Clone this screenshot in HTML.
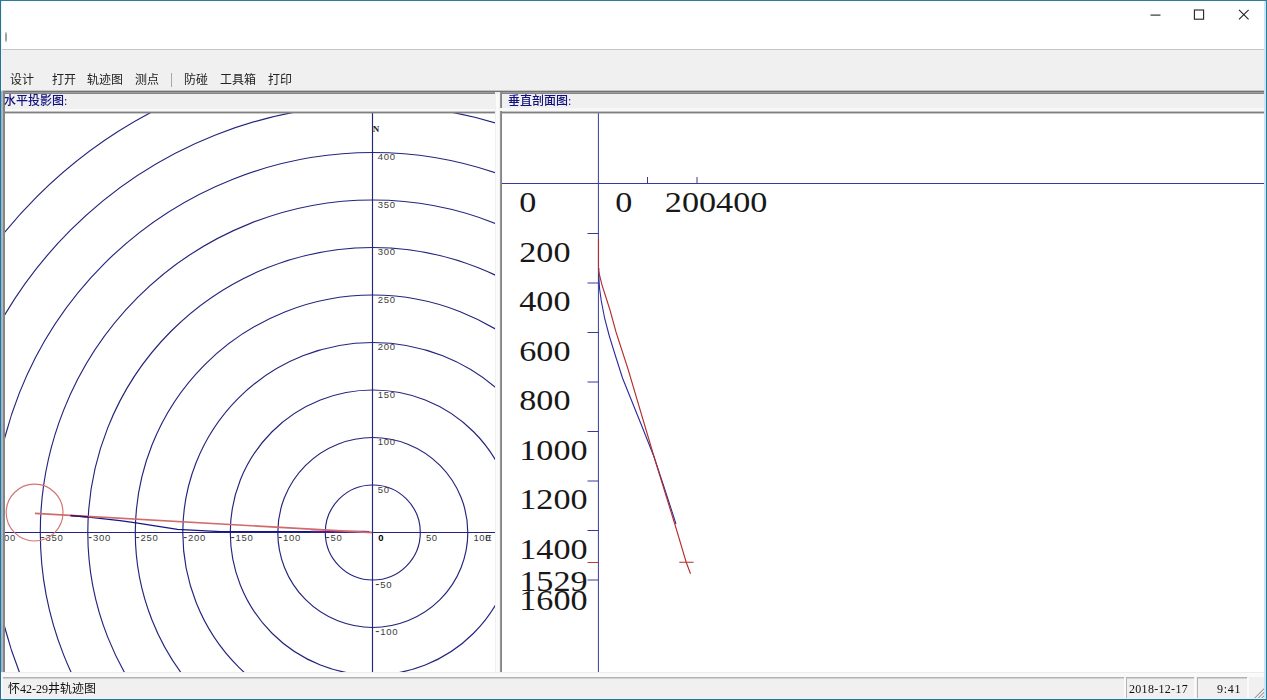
<!DOCTYPE html>
<html lang="zh-CN"><head><meta charset="utf-8"><title>怀42-29井轨迹图</title>
<style>
html,body{margin:0;padding:0}
body{width:1267px;height:700px;position:relative;overflow:hidden;background:#f0f0f0;font-family:"Liberation Serif","Noto Sans CJK SC",sans-serif;font-size:12px;color:#1a1a1a}
.abs{position:absolute}
.st,.lbl,.menu{will-change:transform}
.menu span{position:absolute;top:72px;line-height:16px;white-space:nowrap;color:#222}
.lbl{position:absolute;line-height:14px;color:#101080;font-weight:500;white-space:nowrap}
svg{position:absolute;display:block}
svg text{white-space:pre}
.ax{font-family:"Liberation Sans",sans-serif;font-size:9.5px;letter-spacing:0.7px;fill:#3c3c3c}
.big{font-family:"Liberation Serif","Noto Serif CJK SC",serif;font-size:30px;fill:#181818}
.st{position:absolute;line-height:14px;top:682px;white-space:nowrap;color:#111}
</style></head><body>

<div class="abs" style="left:0;top:0;width:1267px;height:49px;background:#fff"></div>
<div class="abs" style="left:0;top:49px;width:1267px;height:1px;background:#c6c6c6"></div>
<div class="abs" style="left:4.6px;top:32px;width:2.2px;height:10px;border-radius:50%;background:#98a2a6;filter:blur(0.4px)"></div>
<svg style="left:1140px;top:0" width="120" height="30" viewBox="1140 0 120 30"><g fill="none" stroke="#222" stroke-width="1.1"><path d="M1150.5 15.1H1160.5"/><rect x="1194.4" y="10" width="9.2" height="9.2"/><path d="M1239 9.8L1248.6 19.3M1248.6 9.8L1239 19.3"/></g></svg>
<div class="menu">
<span style="left:10px">设计</span>
<span style="left:52px">打开</span>
<span style="left:87px">轨迹图</span>
<span style="left:135px">测点</span>
<span style="left:184px">防碰</span>
<span style="left:220px">工具箱</span>
<span style="left:268px">打印</span>
</div>
<div class="abs" style="left:171px;top:73px;width:1px;height:14px;background:#a8a8a8"></div>
<div class="abs" style="left:2px;top:90px;width:1262px;height:1px;background:#c4c4c4"></div>
<div class="abs" style="left:2px;top:91px;width:1262px;height:1px;background:#727272"></div>
<div class="abs" style="left:2px;top:92px;width:493px;height:1px;background:#9c9c9c"></div>
<div class="abs" style="left:2px;top:93px;width:493px;height:1px;background:#858585"></div>
<div class="abs" style="left:500px;top:92px;width:764px;height:1px;background:#9c9c9c"></div>
<div class="abs" style="left:500px;top:93px;width:764px;height:1px;background:#858585"></div>
<div class="abs" style="left:2px;top:91px;width:1px;height:582px;background:#b0b8c0"></div>
<div class="abs" style="left:3px;top:91px;width:2px;height:582px;background:#858585"></div>
<div class="abs" style="left:5px;top:109px;width:490px;height:2px;background:#f8f8f8"></div>
<div class="abs" style="left:5px;top:111px;width:490px;height:1px;background:#c4c4c4"></div>
<div class="abs" style="left:5px;top:112px;width:490px;height:1px;background:#808080"></div>
<div class="abs" style="left:496px;top:94px;width:3px;height:578px;background:#fbfbfb"></div>
<div class="abs" style="left:500px;top:92px;width:1px;height:580px;background:#949494"></div>
<div class="abs" style="left:501px;top:92px;width:1px;height:580px;background:#848484"></div>
<div class="abs" style="left:500px;top:108px;width:764px;height:3px;background:#f8f8f8"></div>
<div class="abs" style="left:502px;top:111px;width:762px;height:1px;background:#c4c4c4"></div>
<div class="abs" style="left:502px;top:112px;width:762px;height:1px;background:#808080"></div>
<div class="lbl" style="left:3.8px;top:94px">水平投影图:</div>
<div class="lbl" style="left:508px;top:94px">垂直剖面图:</div>
<svg style="left:5px;top:113px;background:#fff" width="490" height="559" viewBox="5 113 490 559">
<g fill="none" stroke="#24247c" stroke-width="1.15">
<circle cx="372.8" cy="532.5" r="47.50"/>
<circle cx="372.8" cy="532.5" r="95.00"/>
<circle cx="372.8" cy="532.5" r="142.50"/>
<circle cx="372.8" cy="532.5" r="190.00"/>
<circle cx="372.8" cy="532.5" r="237.50"/>
<circle cx="372.8" cy="532.5" r="285.00"/>
<circle cx="372.8" cy="532.5" r="332.50"/>
<circle cx="372.8" cy="532.5" r="380.00"/>
<circle cx="372.8" cy="532.5" r="427.50"/>
<circle cx="372.8" cy="532.5" r="475.00"/>
<path d="M372.5 113V672M5 532.5H495"/>
</g>
<g class="ax">
<text x="375.2" y="635.3"><tspan style="font-size:12.5px;letter-spacing:1px">-</tspan>100</text>
<text x="375.2" y="587.8"><tspan style="font-size:12.5px;letter-spacing:1px">-</tspan>50</text>
<text x="377.7" y="492.8">50</text>
<text x="377.7" y="445.3">100</text>
<text x="377.7" y="397.8">150</text>
<text x="377.7" y="350.3">200</text>
<text x="377.7" y="302.8">250</text>
<text x="377.7" y="255.3">300</text>
<text x="377.7" y="207.8">350</text>
<text x="377.7" y="160.3">400</text>
<text x="-7.1" y="541.1"><tspan style="font-size:12.5px;letter-spacing:1px">-</tspan>400</text>
<text x="40.4" y="541.1"><tspan style="font-size:12.5px;letter-spacing:1px">-</tspan>350</text>
<text x="87.9" y="541.1"><tspan style="font-size:12.5px;letter-spacing:1px">-</tspan>300</text>
<text x="135.4" y="541.1"><tspan style="font-size:12.5px;letter-spacing:1px">-</tspan>250</text>
<text x="182.9" y="541.1"><tspan style="font-size:12.5px;letter-spacing:1px">-</tspan>200</text>
<text x="230.4" y="541.1"><tspan style="font-size:12.5px;letter-spacing:1px">-</tspan>150</text>
<text x="277.9" y="541.1"><tspan style="font-size:12.5px;letter-spacing:1px">-</tspan>100</text>
<text x="325.4" y="541.1"><tspan style="font-size:12.5px;letter-spacing:1px">-</tspan>50</text>
<text x="425.9" y="541.1">50</text>
<text x="473.4" y="541.1">100</text>
<text x="378.2" y="540.9" style="font-weight:bold;fill:#000">0</text>
<text x="485.3" y="541.1">E</text>
<text x="372.8" y="131.5" style="font-family:'Liberation Serif',serif;font-size:9px;font-weight:bold;fill:#222;letter-spacing:0">N</text>
</g>
<path d="M70.5 515.6L88.5 517.1L120 520.6L136 522.8L177.5 529.3L206 530.9L221 531.7L300 531.7L366 531.6L372 532.5" fill="none" stroke="#14148c" stroke-width="1.2"/>
<path d="M311 531.6L364 531.6L369 532" fill="none" stroke="#5a1c8c" stroke-width="1.9"/>
<g fill="none" stroke="#d26a6a"><circle cx="34.6" cy="512.6" r="28.4" stroke-width="1.15" stroke="#d47474"/><path d="M35 513.4L372 532.6" stroke-width="1.6"/></g>
<path d="M70.5 515.6L88.5 516.9" fill="none" stroke="#3a1060" stroke-width="1.5"/>
</svg>
<svg style="left:502px;top:113px;background:#fff" width="763" height="559" viewBox="502 113 763 559">
<path d="M598.4 113V672M502 183.5H1265M647.5 177V183.5M697 177V183.5M587.5 233.5H598.4M587.5 283.0H598.4M587.5 332.5H598.4M587.5 382.0H598.4M587.5 431.5H598.4M587.5 481.0H598.4M587.5 530.5H598.4M587.5 580.0H598.4" fill="none" stroke="#3838a0" stroke-width="1"/>
<path d="M587.5 562.5H598" stroke="#d03030" stroke-width="1" fill="none"/>
<g class="big">
<text transform="translate(519.2 212.4) scale(1.14 1)">0</text>
<text transform="translate(615.2 212.4) scale(1.14 1)">0</text>
<text transform="translate(664.8 212.4) scale(1.14 1)">200400</text>
<text transform="translate(519.2 261.9) scale(1.14 1)">200</text>
<text transform="translate(519.2 311.4) scale(1.14 1)">400</text>
<text transform="translate(519.2 360.9) scale(1.14 1)">600</text>
<text transform="translate(519.2 410.4) scale(1.14 1)">800</text>
<text transform="translate(519.2 459.9) scale(1.14 1)">1000</text>
<text transform="translate(519.2 509.4) scale(1.14 1)">1200</text>
<text transform="translate(519.2 558.9) scale(1.14 1)">1400</text>
<text transform="translate(519.2 591.2) scale(1.14 1)">1529</text>
<text transform="translate(519.2 609.9) scale(1.14 1)">1600</text>
</g>
<path d="M598.8 268L599 280L599.6 289L601.3 301L604.8 319L609.3 336L615.5 356L622.5 378L641 424L654 456.8L665 490L676 524" fill="none" stroke="#2a2a9c" stroke-width="1.1"/>
<path d="M598.5 239V271L602 285L610 310L616 332L628 369L655 460L676 528L686.2 562.2L690.5 573.7M679.3 562.3H693.6" fill="none" stroke="#b42c2c" stroke-width="1.1"/>
</svg>
<div class="abs" style="left:5px;top:113px;width:490px;height:1px;background:rgba(128,128,128,0.4)"></div>
<div class="abs" style="left:502px;top:113px;width:762px;height:1px;background:rgba(128,128,128,0.45)"></div>
<div class="abs" style="left:2px;top:672px;width:1263px;height:26px;background:#f0f0f0"></div>
<div class="abs" style="left:1px;top:672px;width:1263px;height:1px;background:#ececec"></div>
<div class="abs" style="left:1px;top:673px;width:1263px;height:4px;background:#fafafa"></div>
<div class="abs" style="left:1px;top:674px;width:2px;height:24px;background:#f4f8fa"></div>
<div class="abs" style="left:3px;top:677px;width:1121px;height:1px;background:#b2b2b2"></div>
<div class="abs" style="left:3px;top:678px;width:1121px;height:1px;background:#d2d2d2"></div>
<div class="abs" style="left:1124px;top:678px;width:2px;height:20px;background:#fafafa"></div>
<div class="abs" style="left:1126px;top:677px;width:68px;height:1px;background:#b2b2b2"></div>
<div class="abs" style="left:1126px;top:678px;width:68px;height:1px;background:#d2d2d2"></div>
<div class="abs" style="left:1126px;top:677px;width:1px;height:21px;background:#b4b4b4"></div>
<div class="abs" style="left:1194px;top:678px;width:2px;height:20px;background:#fafafa"></div>
<div class="abs" style="left:1197px;top:677px;width:50px;height:1px;background:#b2b2b2"></div>
<div class="abs" style="left:1197px;top:678px;width:50px;height:1px;background:#d2d2d2"></div>
<div class="abs" style="left:1197px;top:677px;width:1px;height:21px;background:#b4b4b4"></div>
<div class="abs" style="left:1247px;top:678px;width:2px;height:20px;background:#fafafa"></div>
<div class="st" style="left:8px">怀42-29井轨迹图</div>
<div class="st" style="left:1129.3px;letter-spacing:0.3px">2018-12-17</div>
<div class="st" style="left:1217px;letter-spacing:0.7px">9:41</div>
<svg style="left:1254px;top:687.5px" width="11" height="11" viewBox="0 0 11 11"><path d="M10.5 0.5L0.5 10.5M10.5 4L4 10.5M10.5 7.5L7.5 10.5" stroke="#9a9a9a" stroke-width="1.1" fill="none"/><path d="M10.5 1.8L1.8 10.5M10.5 5.3L5.3 10.5M10.5 8.8L8.8 10.5" stroke="#fff" stroke-width="0.9" fill="none"/></svg>
<div class="abs" style="left:1264px;top:1px;width:2px;height:697px;background:#c4e8f6"></div>
<div class="abs" style="left:1px;top:1px;width:1px;height:90px;background:#e6f6fc"></div>
<div class="abs" style="left:1px;top:91px;width:1px;height:581px;background:#8ab8d6"></div>
<div class="abs" style="left:0;top:0;width:1267px;height:1px;background:#2c7c9c"></div>
<div class="abs" style="left:0;top:0;width:1px;height:700px;background:#2c6f8e"></div>
<div class="abs" style="left:1266px;top:0;width:1px;height:700px;background:#2c7c9c"></div>
<div class="abs" style="left:1px;top:698px;width:1265px;height:1px;background:#dcf6fc"></div>
<div class="abs" style="left:0;top:699px;width:1267px;height:1px;background:#34708c"></div>
</body></html>
